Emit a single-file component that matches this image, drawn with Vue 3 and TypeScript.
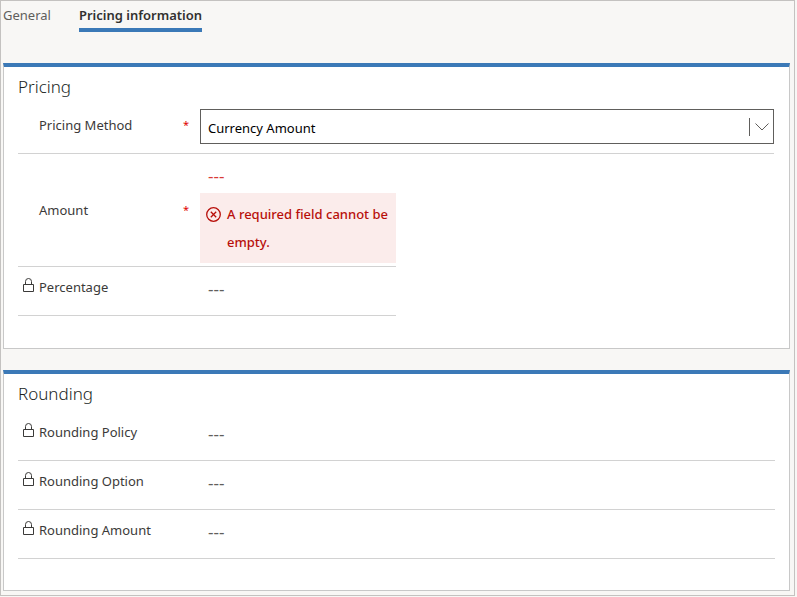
<script setup lang="ts">
import { ref } from 'vue'

interface Field {
  id: string
  label: string
  kind: 'select' | 'text'
  required?: boolean
  locked?: boolean
  half?: boolean
  error?: string
}

interface Section {
  title: string
  fields: Field[]
}

const tabs = ['General', 'Pricing information']
const activeTab = ref('Pricing information')

const methods = ['Currency Amount', 'Percent of List']
const method = ref('Currency Amount')

const sections: Section[] = [
  {
    title: 'Pricing',
    fields: [
      { id: 'pricing-method', label: 'Pricing Method', kind: 'select', required: true },
      {
        id: 'amount',
        label: 'Amount',
        kind: 'text',
        required: true,
        half: true,
        error: 'A required field cannot be empty.',
      },
      { id: 'percentage', label: 'Percentage', kind: 'text', locked: true, half: true },
    ],
  },
  {
    title: 'Rounding',
    fields: [
      { id: 'rounding-policy', label: 'Rounding Policy', kind: 'text', locked: true },
      { id: 'rounding-option', label: 'Rounding Option', kind: 'text', locked: true },
      { id: 'rounding-amount', label: 'Rounding Amount', kind: 'text', locked: true },
    ],
  },
]
</script>

<template>
  <main class="frame">
    <div class="tabs" role="tablist">
      <button
        v-for="tab in tabs"
        :key="tab"
        type="button"
        role="tab"
        class="tab"
        :class="{ active: tab === activeTab }"
        :aria-selected="tab === activeTab"
        @click="activeTab = tab"
      >
        {{ tab }}
      </button>
    </div>

    <section v-for="section in sections" :key="section.title" class="card">
      <h2 class="title">{{ section.title }}</h2>
      <div
        v-for="field in section.fields"
        :key="field.id"
        class="row"
        :class="{ half: field.half, invalid: field.error }"
      >
        <div class="caption">
          <span class="lock">
            <svg v-if="field.locked" width="11" height="14" viewBox="0 0 11 14" aria-hidden="true">
              <path d="M.5 6.5h10v7H.5zM2.5 6.5V3.5a3 3 0 0 1 6 0v3" />
            </svg>
          </span>
          <label :for="field.id">{{ field.label }}</label>
          <span v-if="field.required" class="star">*</span>
        </div>

        <div v-if="field.kind === 'select'" class="picker">
          <select :id="field.id" v-model="method">
            <option v-for="m in methods" :key="m">{{ m }}</option>
          </select>
          <span class="arrow">
            <svg width="14" height="8" viewBox="0 0 14 8" aria-hidden="true">
              <path d="M.5.5 7 7 13.5.5" />
            </svg>
          </span>
        </div>

        <div v-else class="value">
          <input :id="field.id" type="text" value="---" :readonly="field.locked" />
          <div v-if="field.error" class="error" role="alert">
            <svg width="15" height="15" viewBox="0 0 15 15" aria-hidden="true">
              <circle cx="7.5" cy="7.5" r="6.8" />
              <path d="m4.8 4.8 5.4 5.4m0-5.4-5.4 5.4" />
            </svg>
            <span>{{ field.error }}</span>
          </div>
        </div>
      </div>
    </section>
  </main>
</template>

<style>
body {
  background: #f8f7f5;
}
</style>

<style scoped>
.frame {
  display: flex;
  flex-direction: column;
  box-sizing: border-box;
  min-height: calc(100vh - 1px);
  margin-right: 2px;
  padding: 0 4px 4px 2px;
  border: 1px solid #c4c2c0;
  background: #f8f7f5;
  color: #3b3a39;
  font: 13px/20px "Noto Sans", "Open Sans", sans-serif;
}

.tabs {
  display: flex;
  gap: 28px;
  margin-bottom: 31px;
}

.tab {
  padding: 4px 0 3px;
  border: 0;
  border-bottom: 4px solid transparent;
  background: none;
  color: #605e5c;
  font: inherit;
  cursor: pointer;
}

.tab.active {
  border-color: #3b79b7;
  color: #323130;
  font-weight: 600;
}

.card {
  padding: 0 15px 32px 14px;
  border: 1px solid #c8c8c8;
  border-top: 4px solid #3b79b7;
  background: #fff;
}

.card + .card {
  margin-top: 21px;
  padding-right: 14px;
  padding-bottom: 31px;
}

.title {
  margin: 0;
  padding-top: 2px;
  color: #201f1e;
  font-size: 17px;
  font-weight: 300;
  line-height: 36px;
}

.row {
  display: flex;
  box-sizing: border-box;
  min-height: 49px;
  border-bottom: 1px solid #d2d2d2;
}

.row.half {
  width: 50%;
}

.caption {
  display: flex;
  flex: none;
  width: 182px;
  padding-top: 10px;
}

.invalid .caption {
  align-items: center;
  padding-top: 0;
}

.lock {
  flex: none;
  width: 16px;
  padding-left: 5px;
  line-height: 0;
}

.lock svg {
  margin-top: 1px;
  fill: none;
  stroke: #3b3a39;
}

.star {
  margin-left: auto;
  padding-right: 11px;
  color: #e00000;
  font-size: 11px;
}

.picker {
  display: grid;
  flex: 1;
  align-items: center;
  height: 35px;
  margin-top: 4px;
}

.picker select {
  grid-area: 1 / 1;
  width: 100%;
  height: 35px;
  padding: 2px 40px 0 7px;
  border: 1px solid #605e5c;
  border-radius: 0;
  appearance: none;
  background: #fff;
  color: #000;
  font: inherit;
}

.arrow {
  display: flex;
  grid-area: 1 / 1;
  justify-self: end;
  align-items: center;
  height: 18px;
  padding: 0 5px;
  border-left: 1px solid #605e5c;
  pointer-events: none;
}

.arrow svg {
  fill: none;
  stroke: #605e5c;
}

.value {
  flex: 1;
  min-width: 0;
}

.value input {
  display: block;
  box-sizing: border-box;
  width: 100%;
  height: 39px;
  padding: 3px 8px 0;
  border: 0;
  background: none;
  color: #605e5c;
  font: inherit;
  font-size: 17px;
}

.invalid .value input {
  color: #d83b36;
}

.error {
  display: flex;
  gap: 6px;
  margin-bottom: 3px;
  padding: 7px 4px 7px 6px;
  background: #fbeceb;
  color: #b80f0a;
  font-weight: 500;
  line-height: 28px;
}

.error svg {
  flex: none;
  margin-top: 7px;
  fill: none;
  stroke: currentColor;
  stroke-width: 1.3;
}
</style>
